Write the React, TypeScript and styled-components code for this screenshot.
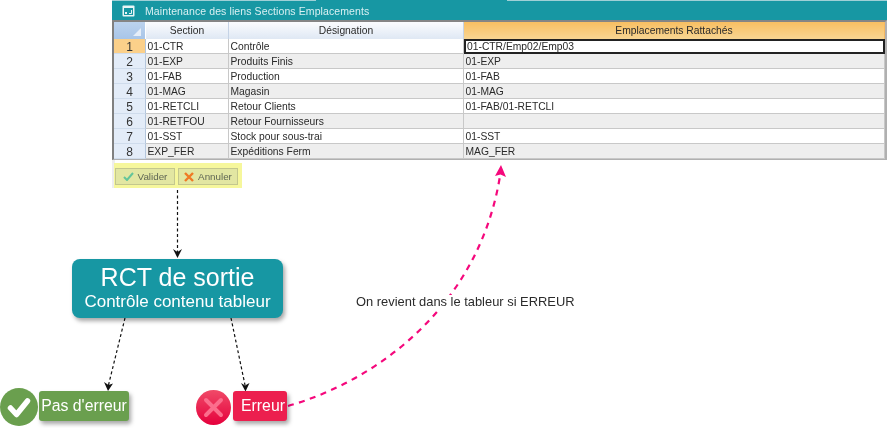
import React from "react";
import styled, { createGlobalStyle } from "styled-components";

const Global = createGlobalStyle`
  html, body { margin: 0; padding: 0; background: #fff; }
  body { font-family: "Liberation Sans", Arial, sans-serif; }
`;

const Canvas = styled.div`
  position: relative;
  width: 891px;
  height: 428px;
  overflow: hidden;
  background: #fff;
  filter: blur(0.3px);
`;

const Window = styled.section`
  position: absolute;
  left: 112px;
  top: 0;
  width: 775px;
  display: flex;
  flex-direction: column;
`;

const TopEdge = styled.div`
  height: 1px;
  background: linear-gradient(90deg, #9fd0d6 0, #9fd0d6 204px, #1797a3 204px, #1797a3 395px, #9fd0d6 395px, #9fd0d6 100%);
`;

const TitleBar = styled.header`
  height: 19px;
  background: #1797a3;
  display: flex;
  align-items: center;
  gap: 10px;
  padding-left: 10px;
  color: #d9f0f2;
  font-size: 10.5px;
  letter-spacing: 0.1px;
`;

const Grid = styled.div`
  display: grid;
  grid-template-columns: 32px 83px 235px 1fr;
  grid-template-rows: 17px repeat(8, 15px);
  border-top: 2px solid #858585;
  border-left: 2px solid #808080;
  border-right: 2px solid #b0b0b0;
  border-bottom: 1px solid #b0b0b0;
  font-size: 10.3px;
  color: #2a2a2a;
`;

const Corner = styled.div`
  background: linear-gradient(#bcd3ee, #a8c5e8);
  border-right: 1px solid #fff;
  position: relative;
  &::after {
    content: "";
    position: absolute;
    right: 4px;
    bottom: 3px;
    border-style: solid;
    border-width: 0 0 8px 8px;
    border-color: transparent transparent #e6eef8 transparent;
  }
`;

const HeadCell = styled.div<{ $active?: boolean }>`
  display: flex;
  align-items: center;
  justify-content: center;
  background: ${(p) =>
    p.$active
      ? "linear-gradient(#f8bf62, #f8d592)"
      : "linear-gradient(#fbfcfe, #dfe8f4)"};
  border-right: 1px solid ${(p) => (p.$active ? "#f5b860" : "#c5d3e6")};
  box-sizing: border-box;
`;

const RowHead = styled.div<{ $active?: boolean }>`
  display: flex;
  align-items: center;
  justify-content: center;
  padding-top: 1px;
  box-sizing: border-box;
  font-size: 12px;
  color: #333;
  background: ${(p) => (p.$active ? "#fbd08a" : "#e3ecf8")};
  border-bottom: 1px solid #cfdcec;
  border-right: 1px solid #b4c6dc;
`;

const Cell = styled.div<{ $alt?: boolean; $selected?: boolean }>`
  display: flex;
  align-items: center;
  box-sizing: border-box;
  padding-left: 1.5px;
  white-space: nowrap;
  overflow: hidden;
  background: ${(p) => (p.$alt ? "#eeeeee" : "#ffffff")};
  border-bottom: 1px solid #c8c8c8;
  border-right: 1px solid #c8c8c8;
  ${(p) => p.$selected && "border: 2px solid #222; padding-left: 1px;"}
`;

const Toolbar = styled.div`
  display: flex;
  align-self: flex-start;
  margin-top: 0;
  padding: 3px 0 0 2px;
  background: linear-gradient(90deg, #eeeeee 0, #eeeeee 3px, transparent 3px);
`;

const ButtonGroup = styled.div`
  display: flex;
  gap: 3px;
  padding: 5px 4px 3px 1px;
  background: #f6f79c;
`;

const ToolButton = styled.button`
  width: 60px;
  height: 17px;
  padding: 0;
  display: flex;
  align-items: center;
  justify-content: center;
  gap: 4px;
  font: 9.8px "Liberation Sans", Arial, sans-serif;
  color: #5f6654;
  background: #e2e6a2;
  border: 1px solid #c3c78e;
`;

const Node = styled.div<{ $x: number; $y: number; $w: number; $h: number; $bg: string; $pad?: number }>`
  position: absolute;
  left: ${(p) => p.$x}px;
  top: ${(p) => p.$y}px;
  width: ${(p) => p.$w}px;
  height: ${(p) => p.$h}px;
  box-sizing: border-box;
  padding-left: ${(p) => p.$pad ?? 0}px;
  background: ${(p) => p.$bg};
  color: #fff;
  display: flex;
  flex-direction: column;
  align-items: center;
  justify-content: center;
  border-radius: 3px;
  box-shadow: 2px 3px 4px rgba(0, 0, 0, 0.35);
  white-space: nowrap;
  font-size: 15.8px;
`;

const MainNode = styled(Node)`
  border-radius: 8px;
`;

const BigLine = styled.div`
  font-size: 25px;
  line-height: 30px;
`;

const SmallLine = styled.div`
  font-size: 17px;
  line-height: 20px;
  margin-bottom: 4px;
`;

const Note = styled.div`
  position: absolute;
  left: 356px;
  top: 295px;
  padding: 0;
  font-size: 12.9px;
  line-height: 14px;
  color: #2b2b2b;
  background: #fff;
  white-space: nowrap;
`;

const Overlay = styled.svg`
  position: absolute;
  left: 0;
  top: 0;
  width: 891px;
  height: 428px;
`;

const StatusIcon = styled.svg<{ $x: number; $y: number; $size: number }>`
  position: absolute;
  left: ${(p) => p.$x}px;
  top: ${(p) => p.$y}px;
  width: ${(p) => p.$size}px;
  height: ${(p) => p.$size}px;
`;

const rows = [
  ["01-CTR", "Contrôle", "01-CTR/Emp02/Emp03"],
  ["01-EXP", "Produits Finis", "01-EXP"],
  ["01-FAB", "Production", "01-FAB"],
  ["01-MAG", "Magasin", "01-MAG"],
  ["01-RETCLI", "Retour Clients", "01-FAB/01-RETCLI"],
  ["01-RETFOU", "Retour Fournisseurs", ""],
  ["01-SST", "Stock pour sous-trai", "01-SST"],
  ["EXP_FER", "Expéditions Ferm", "MAG_FER"],
];

export default function App() {
  return (
    <Canvas>
      <Global />
      <Window>
        <TopEdge />
        <TitleBar>
          <svg width="13" height="12" viewBox="0 0 13 12">
            <rect x="0.5" y="0.5" width="12" height="11" rx="1" fill="#e8f5f6" />
            <rect x="2" y="3" width="9" height="7" fill="#1797a3" />
            <path d="M7 8.5h2.5V5" stroke="#e8f5f6" fill="none" />
            <rect x="3" y="7" width="2" height="2" fill="#e8f5f6" />
          </svg>
          Maintenance des liens Sections Emplacements
        </TitleBar>
        <Grid>
          <Corner />
          <HeadCell>Section</HeadCell>
          <HeadCell>Désignation</HeadCell>
          <HeadCell $active>Emplacements Rattachés</HeadCell>
          {rows.map((r, i) => (
            <React.Fragment key={r[0]}>
              <RowHead $active={i === 0}>{i + 1}</RowHead>
              <Cell $alt={i % 2 === 1}>{r[0]}</Cell>
              <Cell $alt={i % 2 === 1}>{r[1]}</Cell>
              <Cell $alt={i % 2 === 1} $selected={i === 0}>
                {r[2]}
              </Cell>
            </React.Fragment>
          ))}
        </Grid>
        <Toolbar>
          <ButtonGroup>
            <ToolButton>
              <svg width="11" height="9" viewBox="0 0 11 9">
                <path d="M1 5l3 3 6-7" stroke="#63c59a" strokeWidth="2" fill="none" />
              </svg>
              Valider
            </ToolButton>
            <ToolButton>
              <svg width="10" height="10" viewBox="0 0 10 10">
                <path d="M1 1l8 8M9 1l-8 8" stroke="#ef7a24" strokeWidth="2.4" />
              </svg>
              Annuler
            </ToolButton>
          </ButtonGroup>
        </Toolbar>
      </Window>

      <Overlay viewBox="0 0 891 428">
        <g stroke="#111" strokeWidth="1.2" strokeDasharray="3 2.5" fill="none">
          <path d="M177.5 190V252" />
          <path d="M125 318L108.5 385" />
          <path d="M231 318L245 385" />
        </g>
        <g fill="#111">
          <path d="M173 249L177.5 252L182 249L177.5 258Z" />
          <path d="M104 382L108.5 385L113 383.5L108 391Z" />
          <path d="M241 383L245 385.5L249.5 383L245.5 391.5Z" />
        </g>
        <path
          d="M288 406C385 378 480 300 500 176"
          stroke="#f5087c"
          strokeWidth="2.2"
          strokeDasharray="6 5.5"
          fill="none"
        />
        <path d="M495 176L501 165L506 177L500.5 174.5Z" fill="#f5087c" />
      </Overlay>

      <MainNode $x={72} $y={259} $w={211} $h={59} $bg="#1797a3">
        <BigLine>RCT de sortie</BigLine>
        <SmallLine>Contrôle contenu tableur</SmallLine>
      </MainNode>

      <Note>On revient dans le tableur si ERREUR</Note>

      <StatusIcon $x={0} $y={388} $size={38} viewBox="0 0 38 38">
        <circle cx="19" cy="19" r="19" fill="#6a9f4e" />
        <path d="M10.5 20l6 6.5L27.5 13" stroke="#fff" strokeWidth="5.5" strokeLinecap="round" strokeLinejoin="round" fill="none" />
      </StatusIcon>
      <Node $x={39} $y={391} $w={90} $h={30} $bg="#6a9f4e">Pas d'erreur</Node>

      <StatusIcon $x={196} $y={390} $size={35} viewBox="0 0 35 35">
        <defs>
          <linearGradient id="redBall" x1="0" y1="0" x2="0" y2="1">
            <stop offset="0" stopColor="#f04a68" />
            <stop offset="1" stopColor="#e5003c" />
          </linearGradient>
        </defs>
        <circle cx="17.5" cy="17.5" r="17.5" fill="url(#redBall)" />
        <path d="M10 10l15 15M25 10L10 25" stroke="#fb6d8c" strokeWidth="4" strokeLinecap="round" />
      </StatusIcon>
      <Node $x={233} $y={391} $w={54} $h={30} $bg="#ec1f4e" $pad={6}>Erreur</Node>
    </Canvas>
  );
}
